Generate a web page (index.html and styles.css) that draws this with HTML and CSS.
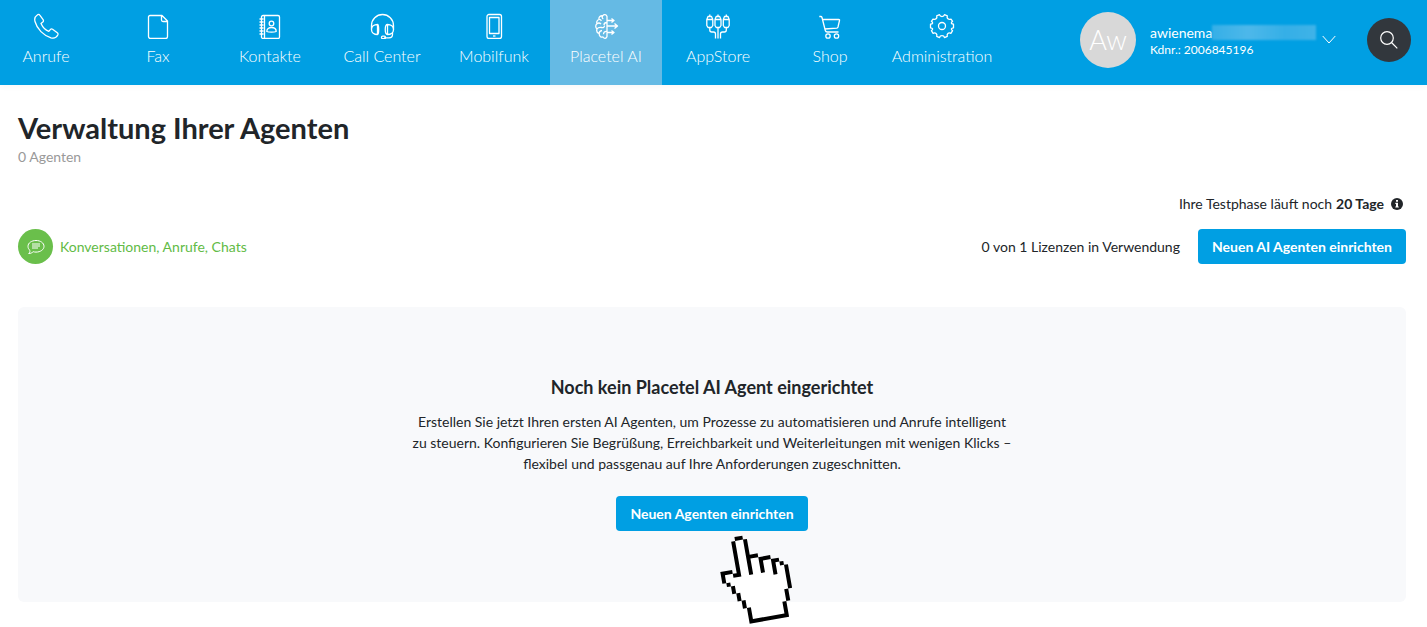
FILE: index.html
```html
<!DOCTYPE html>
<html lang="de">
<head>
<meta charset="utf-8">
<meta name="viewport" content="width=device-width, initial-scale=1">
<title>Verwaltung Ihrer Agenten</title>
<link rel="stylesheet" href="styles.css">
</head>
<body>
<header class="topbar">
  <nav class="nav" aria-label="Hauptnavigation">
    <a class="nav-item" href="#anrufe">
      <svg class="icon" viewBox="0 0 26 26"><path d="M4 2.2C2 3.5 1.2 5.5 2 8.5 4 16 10.5 22.5 18 24.8c3 .7 5.5-.3 6.8-2.8.4-1 .2-1.7-.5-2.2l-4.7-3.5c-.8-.5-1.7-.4-2.3.3l-1.5 1.8C12.5 17.2 9.5 14 8 10.6L9.8 9c.7-.7.8-1.6.3-2.300L6.800 2.200C6.200 1.200 5.200 1.200 4 2.200z"/></svg>
      <span>Anrufe</span>
    </a>
    <a class="nav-item" href="#fax">
      <svg class="icon" viewBox="0 0 26 26"><path d="M5 2.500h12l5.500 5.500v15.500a2 2 0 0 1-2 2H5a2 2 0 0 1-1.500-2v-19.500a1.500 1.500 0 0 1 1.500-1.500zM16.500 2.500v4.500a1.500 1.500 0 0 0 1.500 1.500h4.500"/></svg>
      <span>Fax</span>
    </a>
    <a class="nav-item" href="#kontakte">
      <svg class="icon" viewBox="0 0 26 26"><rect x="4.500" y="2.500" width="18" height="23" rx="1.500"/><path d="M7.500 2.500v23M2.500 6h4M2.500 9h4M2.500 12h4M2.500 15h4M2.500 18h4M2.500 21h4"/><circle cx="14.500" cy="10.500" r="2.300"/><path d="M9.800 18.500c0-2.700 2-4 4.700-4s4.700 1.300 4.700 4c-2 .8-7.400.8-9.400 0z"/></svg>
      <span>Kontakte</span>
    </a>
    <a class="nav-item" href="#callcenter">
      <svg class="icon" viewBox="0 0 26 26"><path d="M2.500 17V12.500a11 11 0 0 1 22 0V17M8.500 11.500v10c-3.500 0-6-2-6-5s2.500-5 6-5zM8.500 11.500c1.600 0 1.600 10 0 10M18.500 11.500v10c3.500 0 6-2 6-5s-2.500-5-6-5zM18.500 11.500c-3 0-3 10 0 10M23.500 19.500v2c0 2-1.500 3.300-3.500 3.300h-5"/><rect x="12.500" y="23.200" width="4" height="2.400" rx="1.200"/></svg>
      <span>Call Center</span>
    </a>
    <a class="nav-item" href="#mobilfunk">
      <svg class="icon" viewBox="0 0 26 26"><rect x="6" y="1.500" width="14.500" height="24" rx="2"/><rect x="8.500" y="4.500" width="9.500" height="16"/><path d="M12 23h2.500"/></svg>
      <span>Mobilfunk</span>
    </a>
    <a class="nav-item nav-item-active" href="#ai" aria-current="page">
      <svg class="icon" viewBox="0 0 26 26"><path d="M14 3.500C13.500 1.500 11 1 9.700 2.800 7.500 2.500 5.500 4 6 6.500 4 7.200 3.300 9 4 10.800 2.300 12 2.300 14.500 4 16c-.7 2 .3 4 2.200 4.700-.2 2.300 1.700 3.800 3.800 3.300C11.300 26 13.500 25.500 14 23.500zM14 7.500h6M14 13h10M14 19.500h6M18.500 5.500l2.500 2-2.500 2M21.500 10.500l3 2.500-3 2.500M18.500 17.500l2.500 2-2.500 2M9.700 2.800C8.800 4 9.200 5.500 10.300 6M4 10.800c1.500-1.200 3-.8 4 .3M6 6.500c1.200-.2 2 .5 2.300 1.500M14 9.500c-2 0-3 1-3 2.500M4 16c1-1.500 2.500-2 4.500-1.500s3-.5 3-2M6.200 20.700c0-2 1-3 2.800-3.200M14 18.500c-2.300-.3-3.500 1-3.500 2.800"/></svg>
      <span>Placetel AI</span>
    </a>
    <a class="nav-item" href="#appstore">
      <svg class="icon" viewBox="0 0 26 26"><path d="M1.800 8V6.500L3 3.500h3.500L7.800 6.500V12.500L6.500 14.500H3L1.800 12.500V8M1.800 6.500h6M10 8V6.500l1.200-3h3.500L16 6.500V12.500L14.700 14.500h-3.500L10 12.500V8M10 6.500h6M18.300 8V6.500l1.200-3H23l1.200 3V12.500L23 14.500h-3.500L18.300 12.500V8M18.300 6.500h6M4.800 3.500v-2M13 3.500v-2M21.300 3.500v-2M4.800 14.500v2.500c0 1.500.8 2 2 2h1.700c1.500 0 2 .8 2 2v4.500M13 14.500v11M21.300 14.500v2.500c0 1.500-.8 2-2 2h-1.800c-1.500 0-2 .8-2 2v4.500"/></svg>
      <span>AppStore</span>
    </a>
    <a class="nav-item" href="#shop">
      <svg class="icon" viewBox="0 0 26 26"><path d="M2.300 3.500h1.500c.7 0 1 .3 1.200 1L8.300 17.500c.3 1.200 1 1.500 2 1.500h11.200M5.500 6.500h16.200c.7 0 1 .4.800 1l-1.500 6.500c-.2.700-.6 1-1.200 1.100L7.700 16"/><circle cx="11" cy="23" r="2.200"/><circle cx="19.500" cy="23" r="2.200"/></svg>
      <span>Shop</span>
    </a>
    <a class="nav-item" href="#administration">
      <svg class="icon" viewBox="0 0 26 26"><path d="M10.500 1.700c.6 2.600 4.400 2.600 5 0l2.800 1.100c-.8 2.600 1.200 4.400 3.700 3.300l1.600 2.200c-2 1.500-1.500 2.700.9 2.900v3.600c-2.400.2-2.900 1.400-.9 2.900l-1.700 2.600c-2.500-1.200-4.400.5-3.600 3l-2.800 1.300c-.7-2.600-4.300-2.600-5 0l-2.800-1.300c.8-2.500-1.100-4.200-3.600-3l-1.700-2.600c2-1.500 1.500-2.700-.9-2.900v-3.600c2.400-.2 2.900-1.400.9-2.900L4 6.100C6.500 7.200 8.500 5.400 7.700 2.800z"/><circle cx="13" cy="13" r="3.500"/></svg>
      <span>Administration</span>
    </a>
  </nav>
  <div class="account">
    <button class="user" type="button" aria-label="Benutzerkonto">
      <span class="avatar">Aw</span>
      <span class="user-text">
        <span class="user-name">awienema<span class="redacted"></span></span>
        <span class="user-number">Kdnr.: 2006845196</span>
      </span>
      <svg class="chevron" viewBox="0 0 14 9"><path d="M.7 1L7 8l6.300-7"/></svg>
    </button>
    <button class="search" type="button" aria-label="Suche">
      <svg class="search-icon" viewBox="0 0 20 20"><circle cx="8" cy="8" r="6.300"/><path d="M12.500 12.500l5.800 5.800"/></svg>
    </button>
  </div>
</header>
<main class="page">
  <h1 class="title">Verwaltung Ihrer Agenten</h1>
  <p class="count">0 Agenten</p>
  <p class="trial">Ihre Testphase läuft noch <strong>20 Tage</strong>
    <svg class="info" viewBox="0 0 12 12"><circle cx="6" cy="6" r="6"/><path d="M5 2h2v1.700H5zM4.300 4.700H7v3.700h.8v1.200H4.300V8.400H5V5.900h-.7z"/></svg>
  </p>
  <div class="toolbar">
    <a class="conversations" href="#konversationen">
      <span class="bubble"><svg class="bubble-icon" viewBox="0 0 18 18"><path d="M9 2.500c4.500 0 8 2.500 8 5.800s-3.500 5.800-8 5.800c-1 0-2-.1-2.800-.4-1 1-2.500 1.800-4.500 1.800.9-.8 1.400-1.800 1.300-3C1.700 11.500 1 10 1 8.300c0-3.300 3.500-5.800 8-5.800zM5 6h8M5 8h8M5 10h6"/></svg></span>
      <span>Konversationen, Anrufe, Chats</span>
    </a>
    <div class="licenses">
      <span>0 von 1 Lizenzen in Verwendung</span>
      <button class="btn" type="button">Neuen AI Agenten einrichten</button>
    </div>
  </div>
  <section class="empty">
    <h2 class="empty-title">Noch kein Placetel AI Agent eingerichtet</h2>
    <p class="empty-text">Erstellen Sie jetzt Ihren ersten AI Agenten, um Prozesse zu automatisieren und Anrufe intelligent<br>zu steuern. Konfigurieren Sie Begrüßung, Erreichbarkeit und Weiterleitungen mit wenigen Klicks –<br>flexibel und passgenau auf Ihre Anforderungen zugeschnitten.</p>
    <div class="empty-action">
      <button class="btn" type="button">Neuen Agenten einrichten</button>
      <svg class="hand" viewBox="0 0 80 92" aria-hidden="true">
        <g transform="translate(20.700 6.300) rotate(-10) scale(4) translate(-6 -.5)">
          <path fill="#fff" d="M5 .5h2v5h3v1h3v1h2v1h1v1h.5v5.500h-1v3h-1v3.500H5.500v-3.500h-1v-2h-1v-2h-1v-2h-1v-1h-1v-2.500h3.500v1H5z"/>
          <path d="M5 0h2v1H5zM4 1h1v9H3V9h1zM7 1h1v4h2v1H8v4H7zM10 6h3v1h-2v3h-1zM13 7h2v1h-1v3h-1zM15 8h1v1h-1zM16 9h1v6h-1zM15 15h1v3h-1zM14 18h1v3h-1zM5 21h10v1H5zM5 18h1v4H5zM4 16h1v2H4zM3 14h1v2H3zM2 12h1v2H2zM1 11h1v1H1zM0 8h3v1H1v2H0z"/>
        </g>
      </svg>
    </div>
  </section>
</main>
</body>
</html>
```
FILE: styles.css
```css
* { box-sizing: border-box; }

body {
  margin: 0;
  background: #fff;
  color: #212529;
  font-family: Lato, "Open Sans", sans-serif;
  font-size: 14px;
  line-height: 21px;
}

h1, h2, p { margin: 0; }
a { color: inherit; text-decoration: none; }
button { font: inherit; border: 0; cursor: pointer; }

.topbar {
  display: flex;
  justify-content: space-between;
  height: 85px;
  background: #009fe3;
  box-shadow: 0 2px 6px rgba(0, 0, 0, 0.03);
  color: #fff;
}

.nav { display: flex; margin-left: -10px; }

.nav-item {
  display: flex;
  flex-direction: column;
  align-items: center;
  gap: 5px;
  width: 112px;
  padding-top: 13px;
  font-size: 16px;
  line-height: 24px;
  white-space: nowrap;
  font-weight: 300;
}

.nav-item-active { background: #65bae4; }

.icon {
  width: 26px;
  height: 26px;
  fill: none;
  stroke: #fff;
  stroke-width: 1.3;
  stroke-linejoin: round;
}

.account {
  display: flex;
  align-items: center;
  gap: 31px;
  padding: 0 16px 6px 0;
}

.user {
  display: flex;
  align-items: center;
  padding: 0;
  background: none;
  color: #fff;
  font-size: 14px;
  line-height: 17px;
  text-align: left;
}

.avatar {
  width: 56px;
  height: 56px;
  margin-right: 14px;
  border-radius: 50%;
  background: #d8d8d8;
  font-size: 27px;
  font-weight: 300;
  line-height: 56px;
  text-align: center;
}

.user-text {
  display: flex;
  flex-direction: column;
  width: 166px;
  padding-top: 3px;
}

.user-name { display: flex; align-items: center; }
.user-number { font-size: 12px; }

.redacted {
  flex: 1;
  height: 15px;
  background: linear-gradient(90deg, #35afe7, #4db8ea 35%, #35afe7 70%, #3fb3e8);
  filter: blur(1px);
}

.chevron {
  width: 14px;
  height: 9px;
  margin-left: 6px;
  fill: none;
  stroke: #fff;
}

.search {
  display: flex;
  align-items: center;
  justify-content: center;
  width: 44px;
  height: 44px;
  padding: 0;
  border-radius: 50%;
  background: #32373d;
}

.search-icon {
  width: 20px;
  height: 20px;
  fill: none;
  stroke: #fff;
  stroke-width: 1.2;
}

.page { padding: 27px 21px 24px 18px; }

.title { font-size: 29px; font-weight: 700; line-height: 32px; }
.count { margin-top: 2px; color: #999; }

.trial {
  display: flex;
  align-items: center;
  justify-content: flex-end;
  gap: 4px;
  margin-top: 26px;
  padding-right: 3px;
}

.info { width: 12px; height: 12px; margin-left: 3px; fill: #212529; }
.info path { fill: #fff; }

.toolbar {
  display: flex;
  align-items: center;
  justify-content: space-between;
  margin-top: 15px;
}

.conversations {
  display: flex;
  align-items: center;
  gap: 7px;
  color: #62bb46;
}

.bubble {
  display: flex;
  align-items: center;
  justify-content: center;
  width: 35px;
  height: 35px;
  border-radius: 50%;
  background: #6abf4b;
}

.bubble-icon { width: 18px; height: 18px; fill: none; stroke: #fff; }

.licenses { display: flex; align-items: center; gap: 18px; }

.btn {
  height: 35px;
  padding: 0 14px;
  border-radius: 4px;
  background: #009fe3;
  color: #fff;
  font-weight: 700;
  white-space: nowrap;
}

.empty {
  display: flex;
  flex-direction: column;
  align-items: center;
  margin-top: 43px;
  padding: 68px 24px 71px;
  border-radius: 6px;
  background: #f8f9fb;
  text-align: center;
}

.empty-title { font-size: 18px; font-weight: 700; line-height: 24px; }
.empty-text { margin-top: 12px; }
.empty-action { position: relative; margin-top: 22px; }

.hand {
  position: absolute;
  top: 36px;
  left: 102px;
  width: 80px;
  height: 92px;
}
```
